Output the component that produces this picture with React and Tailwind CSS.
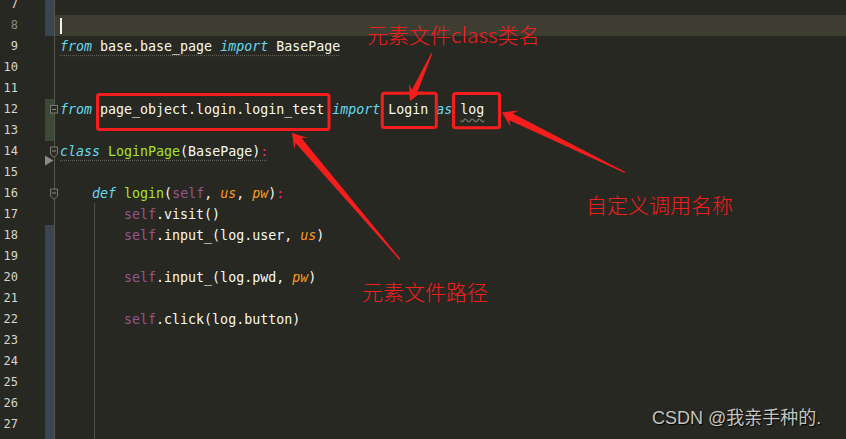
import React from "react";

const K = ({ children }) => <span className="italic text-[#66d9ef]">{children}</span>;
const F = ({ children }) => <span className="text-[#a6e22e]">{children}</span>;
const S = ({ children }) => <span className="text-[#94558d]">{children}</span>;
const P = ({ children }) => <span className="italic text-[#fd971f]">{children}</span>;
const C = ({ children }) => <span className="text-[#f92672]">{children}</span>;

const lines = [
  { n: 7, strip: "blue" },
  { n: 8, strip: "blue", hl: true, cursor: true },
  {
    n: 9,
    code: (
      <span className="underline decoration-dotted decoration-[#5e5e54] underline-offset-[4px]">
        <K>from</K> base.base_page <K>import</K> BasePage
      </span>
    ),
  },
  { n: 10 },
  { n: 11 },
  {
    n: 12,
    strip: "green",
    code: (
      <>
        <K>from</K> page_object.login.login_test <K>import</K> Login <K>as</K>{" "}
        <span className="underline decoration-wavy decoration-[#6e6e65] underline-offset-[4px]">log</span>
      </>
    ),
  },
  { n: 13, strip: "green" },
  {
    n: 14,
    code: (
      <span className="underline decoration-dotted decoration-[#5e5e54] underline-offset-[4px]">
        <K>class</K> <F>LoginPage</F>(BasePage)<C>:</C>
      </span>
    ),
  },
  { n: 15 },
  {
    n: 16,
    code: (
      <>
        {"    "}
        <K>def</K> <F>login</F>(<S>self</S>, <P>us</P>, <P>pw</P>)<C>:</C>
      </>
    ),
  },
  { n: 17, code: <>{"        "}<S>self</S>.visit()</> },
  { n: 18, strip: "blue", code: <>{"        "}<S>self</S>.input_(log.user, <P>us</P>)</> },
  { n: 19, strip: "blue" },
  { n: 20, strip: "blue", code: <>{"        "}<S>self</S>.input_(log.pwd, <P>pw</P>)</> },
  { n: 21, strip: "blue" },
  { n: 22, strip: "blue", code: <>{"        "}<S>self</S>.click(log.button)</> },
  { n: 23, strip: "blue" },
  { n: 24, strip: "blue" },
  { n: 25, strip: "blue" },
  { n: 26, strip: "blue" },
  { n: 27, strip: "blue" },
  { n: null, strip: "blue" },
];

function Row({ n, strip, hl, cursor, code }) {
  const stripCls =
    strip === "blue" ? "bg-[#3a4552]" : strip === "green" ? "bg-[#3a4a35]" : "bg-transparent";
  return (
    <div className="flex h-[21px] shrink-0">
      <div
        className={
          hl
            ? "w-[45px] pr-[27px] text-right text-[12px] leading-[21px] text-[#8c8c86]"
            : "w-[45px] pr-[27px] text-right text-[12px] leading-[21px] text-[#d6d6d0]"
        }
      >
        {n}
      </div>
      <div className={`w-[9px] h-full ${stripCls}`} />
      <div className="w-px h-full bg-[#56564f]" />
      <div
        className={
          hl
            ? "flex-1 h-full pl-[5px] leading-[21px] whitespace-pre bg-[#3e3d32]"
            : "flex-1 h-full pl-[5px] leading-[21px] whitespace-pre"
        }
      >
        {cursor ? <span className="inline-block w-[2px] h-[16px] align-middle bg-[#f0f0f0]" /> : null}
        {code}
      </div>
    </div>
  );
}

function arrowPts(T, Pt, barbAlong, hw, joinAlong, sw) {
  const dx = Pt[0] - T[0];
  const dy = Pt[1] - T[1];
  const L = Math.hypot(dx, dy);
  const ux = dx / L;
  const uy = dy / L;
  const nx = -uy;
  const ny = ux;
  const J = [Pt[0] - ux * joinAlong, Pt[1] - uy * joinAlong];
  const Bb = [Pt[0] - ux * barbAlong, Pt[1] - uy * barbAlong];
  const pts = [
    [T[0] + nx * 0.6, T[1] + ny * 0.6],
    [J[0] + nx * sw, J[1] + ny * sw],
    [Bb[0] + nx * hw, Bb[1] + ny * hw],
    Pt,
    [Bb[0] - nx * hw, Bb[1] - ny * hw],
    [J[0] - nx * sw, J[1] - ny * sw],
    [T[0] - nx * 0.6, T[1] - ny * 0.6],
  ];
  return pts.map((p) => p.map((v) => v.toFixed(1)).join(",")).join(" ");
}

export default function App() {
  const red = "#f61d1d";
  return (
    <div
      className="relative w-[846px] h-[439px] overflow-hidden bg-[#272822] text-[#f8f8f2] text-[13.3px]"
      style={{ fontFamily: '"DejaVu Sans Mono", "Liberation Mono", monospace' }}
    >
      <div className="flex flex-col -mt-[6.5px]">
        {lines.map((l, i) => (
          <Row key={i} {...l} />
        ))}
      </div>

      {/* gutter icons, indent guide, annotations */}
      <svg className="absolute left-0 top-0 pointer-events-none" width="846" height="439">
        <line x1="94.5" y1="203" x2="94.5" y2="439" stroke="#4d4d46" strokeWidth="1" />
        {/* fold markers */}
        <rect x="50.5" y="105.5" width="7" height="7.5" fill="#2b2b26" stroke="#7a7a74" />
        <line x1="52" y1="109.5" x2="56" y2="109.5" stroke="#8a8a84" />
        <polygon points="50.5,147 57.5,147 57.5,154 54,157.5 50.5,154" fill="#2b2b26" stroke="#7a7a74" />
        <line x1="52" y1="151" x2="56" y2="151" stroke="#8a8a84" />
        <polygon points="50.5,189 57.5,189 57.5,196 54,199.5 50.5,196" fill="#2b2b26" stroke="#7a7a74" />
        <line x1="52" y1="193" x2="56" y2="193" stroke="#8a8a84" />
        <polygon points="45,155.5 53.5,160.5 45,165.5" fill="#8a8a86" />

        {/* red boxes */}
        <rect x="97.5" y="94.5" width="231.5" height="35" rx="2" fill="none" stroke={red} strokeWidth="3" />
        <rect x="382.3" y="93.2" width="54" height="34.3" rx="2" fill="none" stroke={red} strokeWidth="3" />
        <rect x="453.5" y="93.6" width="46" height="34.2" rx="2" fill="none" stroke={red} strokeWidth="3" />

        {/* arrows */}
        <polygon points={arrowPts([432, 53], [410, 101], 15, 8, 11, 3)} fill={red} />
        <polygon points={arrowPts([625, 172.5], [502, 112.5], 14, 9, 10, 3.8)} fill={red} />
        <polygon points={arrowPts([400, 259.5], [292, 133], 14, 8.8, 10, 3.8)} fill={red} />
      </svg>

      <div
        className="absolute left-[367px] top-[22px] text-[21px] font-light leading-[24px] text-[#f61d1d] whitespace-nowrap"
        style={{ fontFamily: '"Noto Sans CJK SC", sans-serif' }}
      >
        元素文件class类名
      </div>
      <div
        className="absolute left-[586px] top-[192px] text-[21px] font-light leading-[24px] text-[#f61d1d] whitespace-nowrap"
        style={{ fontFamily: '"Noto Sans CJK SC", sans-serif' }}
      >
        自定义调用名称
      </div>
      <div
        className="absolute left-[362px] top-[279px] text-[21px] font-light leading-[24px] text-[#f61d1d] whitespace-nowrap"
        style={{ fontFamily: '"Noto Sans CJK SC", sans-serif' }}
      >
        元素文件路径
      </div>

      <div
        className="absolute left-[652px] top-[406px] text-[18px] leading-[24px] text-[#c4c4c0] whitespace-nowrap [text-shadow:1px_1px_1px_#000]"
        style={{ fontFamily: '"Liberation Sans", "Noto Sans CJK SC", sans-serif' }}
      >
        CSDN @我亲手种的.
      </div>
    </div>
  );
}
